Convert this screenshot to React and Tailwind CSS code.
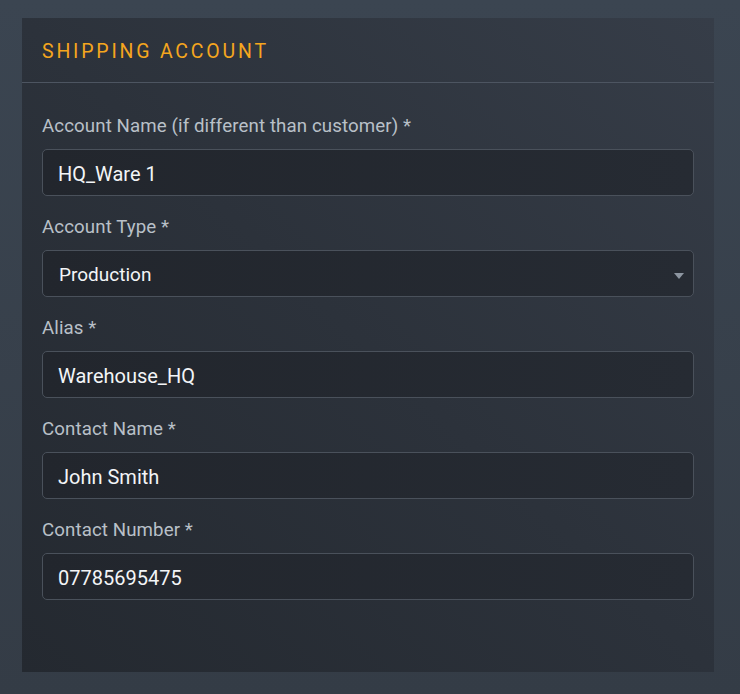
import React from 'react';

const fields = [
  { label: 'Account Name (if different than customer) *', value: 'HQ_Ware 1' },
  { label: 'Account Type *', value: 'Production', select: true },
  { label: 'Alias *', value: 'Warehouse_HQ' },
  { label: 'Contact Name *', value: 'John Smith' },
  { label: 'Contact Number *', value: '07785695475' },
];

const Field = ({ label, value, select }) => (
  <div className="flex flex-col gap-[10px]">
    <label className="text-[18.7px] leading-[26px] tracking-[0.1px] text-[#b9c0c8]">{label}</label>
    <div className="relative flex h-[47px] items-center rounded-[5px] border border-[#4a515b] bg-gradient-to-r from-[#22262d] to-[#262b33] pl-[15px] pr-[14px]">
      <span className={`text-[#f3f5f7] ${select ? 'text-[19px] pl-px pt-[4px]' : 'text-[20px] pt-[2px]'}`}>{value}</span>
      {select && (
        <svg className="absolute right-[9px] top-[22px]" width="10" height="6" viewBox="0 0 10 6">
          <path d="M0 0 L10 0 L5 6 Z" fill="#8d96a1" />
        </svg>
      )}
    </div>
  </div>
);

const App = () => {
  return (
    <div
      className="h-[694px] w-[740px] bg-gradient-to-b from-[#3b4551] to-[#343c46] pl-[22px] pr-[26px] pt-[18px] pb-[22px]"
      style={{ fontFamily: 'Roboto, "Liberation Sans", sans-serif' }}
    >
      <div className="flex h-[654px] flex-col bg-gradient-to-tr from-[#242930] via-[#2c323b] to-[#363d48]">
        <div className="flex h-[65px] items-center border-b border-[#4d5561] px-5 pt-[3px]">
          <h2 className="text-[19.5px] uppercase tracking-[2.8px] text-[#f5a61e]">Shipping Account</h2>
        </div>
        <div className="flex flex-col gap-[18px] px-5 pt-[30px]">
          {fields.map((f) => (
            <Field key={f.label} {...f} />
          ))}
        </div>
      </div>
    </div>
  );
};

export default App;
